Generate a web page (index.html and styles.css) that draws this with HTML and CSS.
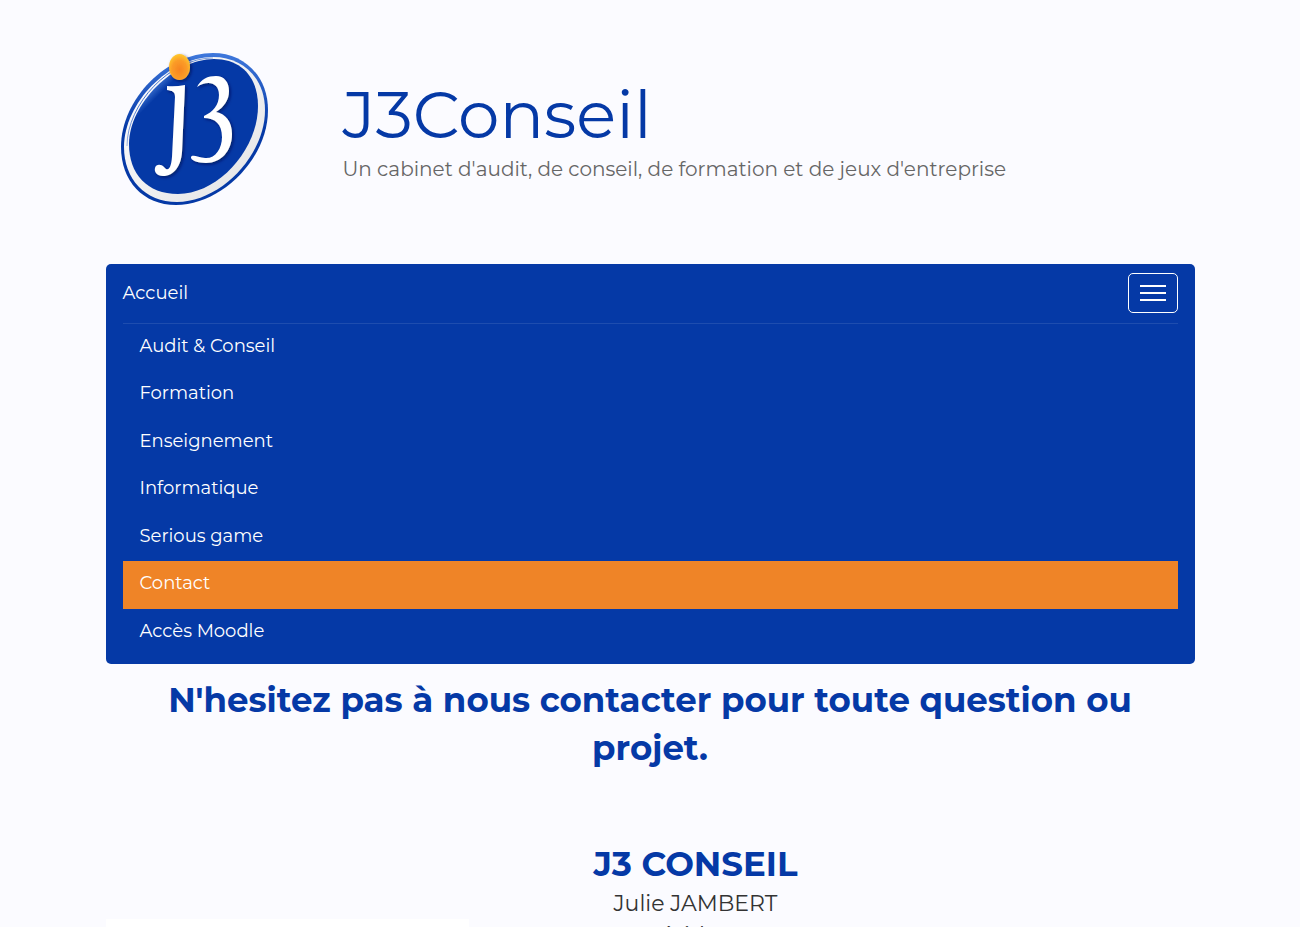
FILE: index.html
```html
<!DOCTYPE html>
<html lang="fr">
<head>
<meta charset="utf-8">
<meta name="viewport" content="width=device-width, initial-scale=1">
<title>J3Conseil - Contact</title>
<link rel="stylesheet" href="styles.css">
</head>
<body>
<div class="page">
  <header class="header">
    <a class="logo" href="#" aria-label="J3Conseil">
      <svg viewBox="0 0 170 180" width="170" height="180" aria-hidden="true">
        <defs>
          <radialGradient id="dot" cx=".5" cy=".6" r=".6">
            <stop offset="0" stop-color="#f68420"/>
            <stop offset=".6" stop-color="#fb9c28"/>
            <stop offset="1" stop-color="#ffc92e"/>
          </radialGradient>
          <linearGradient id="rim" x1="0" y1="0" x2="0" y2="1">
            <stop offset="0" stop-color="#3f78dc"/>
            <stop offset=".5" stop-color="#0539a6"/>
          </linearGradient>
          <linearGradient id="band" x1="0" y1="0" x2="1" y2="1">
            <stop offset="0" stop-color="#ffffff"/>
            <stop offset="1" stop-color="#e2e2e4"/>
          </linearGradient>
          <linearGradient id="face" gradientUnits="userSpaceOnUse" x1="42" y1="42" x2="52" y2="52">
            <stop offset="0" stop-color="#4f86e0"/>
            <stop offset="1" stop-color="#0539a6"/>
          </linearGradient>
          <linearGradient id="groove" gradientUnits="userSpaceOnUse" x1="40" y1="40" x2="80" y2="80">
            <stop offset="0" stop-color="#2a5fc8"/>
            <stop offset="1" stop-color="#2a5fc8" stop-opacity="0"/>
          </linearGradient>
          <filter id="shade" x="-20%" y="-20%" width="150%" height="150%">
            <feDropShadow dx="1.5" dy="1.5" stdDeviation="1.5" flood-color="#001850" flood-opacity=".7"/>
          </filter>
        </defs>
        <path fill="url(#rim)" d="M103 13C134 13 158 36 158 70C158 119 111 165 66 165C33 165 11 141 11 107C11 59 57 13 103 13Z"/>
        <path fill="url(#band)" d="M103 17C133 17 155 38 155 70C155 116 110 162 67 162C35 162 14 139 14 107C14 63 59 17 103 17Z"/>
        <path fill="url(#face)" d="M104 19C131 19 148 37 148 66C148 110 108 154 68 154C37 154 19 134 19 104C19 64 64 19 104 19Z"/>
        <path fill="none" stroke="url(#groove)" d="M17 106C17 64 60 18 103 18"/>
        <path filter="url(#shade)" fill="#fff" d="M57 46Q65 47 75 45L72 112C71 126 64 136 53 136C47 136 44 132 45 128C46 124 51 124 54 127C58 132 61 129 62 117L65 57C65 51 62 51 57 50Z"/>
        <path filter="url(#shade)" fill="#fff" d="M87 47C91 39 98 36 106 36C114 36 119 42 119 51C119 60 114 67 106 72C116 74 122 82 122 94C122 111 111 123 96 123C88 123 80 120 81 117C82 114 88 117 95 118C105 119 112 109 112 97C112 84 105 78 94 78L94 76C103 72 109 65 109 55C109 42 97 40 87 47Z"/>
        <ellipse filter="url(#shade)" cx="69.500" cy="27" rx="10.500" ry="13" fill="url(#dot)"/>
      </svg>
    </a>
    <div class="brand">
      <h1 class="brand-name">J3Conseil</h1>
      <p class="tagline">Un cabinet d'audit, de conseil, de formation et de jeux d'entreprise</p>
    </div>
  </header>

  <nav class="navbar" aria-label="Menu principal">
    <div class="navbar-top">
      <a class="navbar-home" href="#">Accueil</a>
      <button class="toggle" type="button" aria-label="Menu" aria-expanded="true">
        <span class="bar"></span><span class="bar"></span><span class="bar"></span>
      </button>
    </div>
    <ul class="menu">
      <li><a href="#">Audit &amp; Conseil</a></li>
      <li><a href="#">Formation</a></li>
      <li><a href="#">Enseignement</a></li>
      <li><a href="#">Informatique</a></li>
      <li><a href="#">Serious game</a></li>
      <li><a class="active" href="#" aria-current="page">Contact</a></li>
      <li><a href="#">Accès Moodle</a></li>
    </ul>
  </nav>

  <main>
    <h2 class="lead">N'hesitez pas à nous contacter pour toute question ou projet.</h2>
    <div class="contact">
      <div class="panel"></div>
      <address class="card">
        <h2 class="company">J3 CONSEIL</h2>
        <p>Julie JAMBERT</p>
        <p>Présidente</p>
      </address>
    </div>
  </main>
</div>
</body>
</html>
```
FILE: styles.css
```css
* {
  box-sizing: border-box;
}

html {
  height: 100%;
  overflow: hidden;
}

body {
  height: 100%;
  margin: 0;
  overflow: hidden;
  background: #fbfbff;
  color: #333;
  font-family: Montserrat, Inter, sans-serif;
  font-size: 18px;
}

h1, h2, p, ul {
  margin: 0;
  padding: 0;
}

.page {
  width: 84%;
  max-width: 1089px;
  margin: 0 auto;
}

.header {
  display: flex;
  align-items: flex-start;
  gap: 63px;
  padding: 40px 4px 44px;
}

.logo svg {
  display: block;
}

.brand {
  padding-top: 35px;
}

.brand-name {
  color: #0539a6;
  font-size: 66px;
  font-weight: 400;
  line-height: 80px;
}

.tagline {
  color: #666;
  font-size: 20px;
  line-height: 28px;
}

.navbar {
  padding: 0 17px 8px;
  border-radius: 5px;
  background: #0539a6;
}

.navbar-top {
  display: flex;
  align-items: center;
  justify-content: space-between;
  height: 60px;
  padding-bottom: 1px;
  border-bottom: 1px solid #1e4daf;
}

.navbar a {
  color: #fff;
  text-decoration: none;
}

.toggle {
  display: flex;
  flex-direction: column;
  align-items: center;
  justify-content: center;
  gap: 5px;
  width: 50px;
  height: 40px;
  padding: 0;
  border: 1px solid #fff;
  border-radius: 5px;
  background: none;
}

.bar {
  width: 26px;
  height: 2px;
  background: #fff;
}

.menu {
  display: grid;
  grid-auto-rows: 1fr;
  min-height: 332px;
  list-style: none;
}

.menu a {
  display: block;
  height: 100%;
  padding: 0 17px;
  line-height: 45px;
}

.menu .active {
  background: #ef8427;
}

.lead,
.company {
  color: #0539a6;
  font-size: 34px;
  font-weight: 700;
  line-height: 48px;
  text-align: center;
}

.lead {
  padding: 12px 17px 0;
}

.contact {
  display: grid;
  grid-template-columns: 1fr 2fr;
  padding-top: 68px;
}

.panel {
  height: 400px;
  margin-top: 79px;
  background: #fff;
}

.card {
  padding-right: 272px;
  font-size: 22px;
  font-style: normal;
  line-height: 32px;
  text-align: center;
}
```
